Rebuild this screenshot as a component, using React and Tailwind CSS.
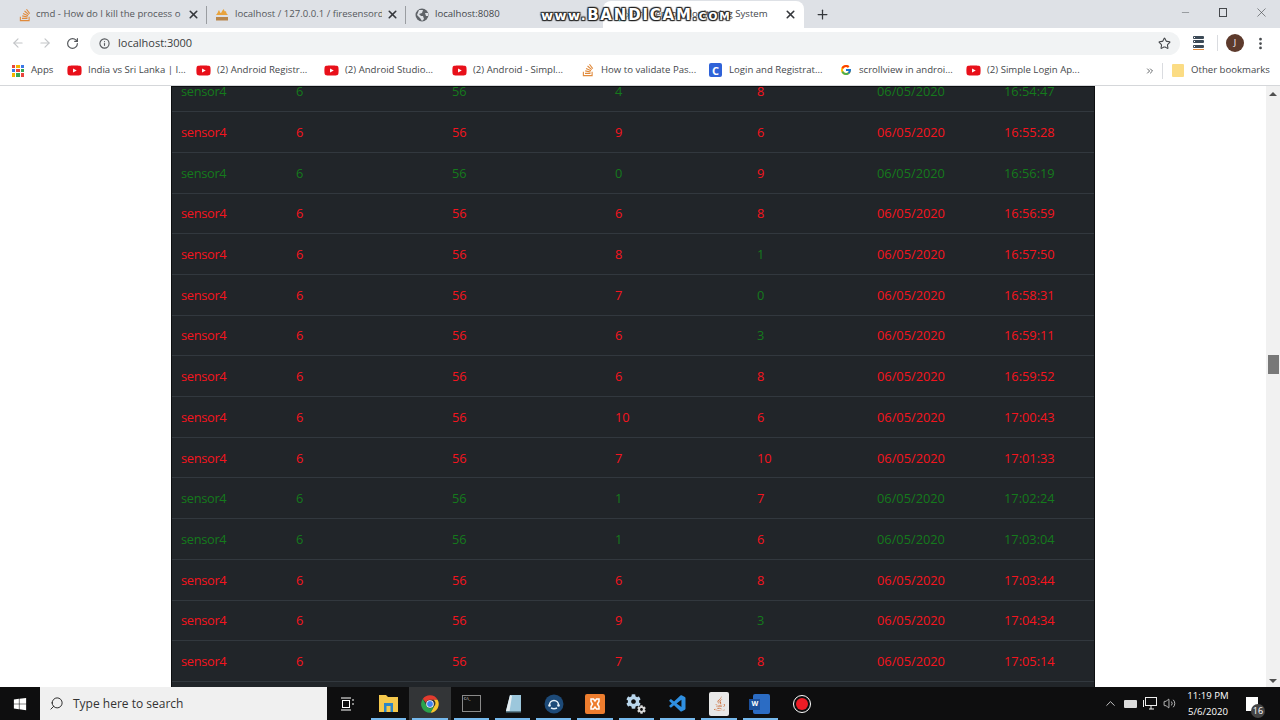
import React from 'react';
import { ArrowLeft, ArrowRight, RotateCw, Info, Star, X, Plus, Minus, MoreVertical, ChevronsRight, ChevronUp, Search, Volume2 } from 'lucide-react';
import { FaWindows, FaYoutube, FaStackOverflow, FaJava, FaCog } from 'react-icons/fa';
import { FcGoogle } from 'react-icons/fc';
import { VscVscode } from 'react-icons/vsc';

const R = 'text-[#f5141e]';
const G = 'text-[#157a1c]';

// [row colour, value 1, value 1 colour, value 2, value 2 colour, time]
const rows = [
  [G, '4', G, '8', R, '16:54:47'],
  [R, '9', R, '6', R, '16:55:28'],
  [G, '0', G, '9', R, '16:56:19'],
  [R, '6', R, '8', R, '16:56:59'],
  [R, '8', R, '1', G, '16:57:50'],
  [R, '7', R, '0', G, '16:58:31'],
  [R, '6', R, '3', G, '16:59:11'],
  [R, '6', R, '8', R, '16:59:52'],
  [R, '10', R, '6', R, '17:00:43'],
  [R, '7', R, '10', R, '17:01:33'],
  [G, '1', G, '7', R, '17:02:24'],
  [G, '1', G, '6', R, '17:03:04'],
  [R, '6', R, '8', R, '17:03:44'],
  [R, '9', R, '3', G, '17:04:34'],
  [R, '7', R, '8', R, '17:05:14'],
];

const bookmarks = [
  { label: 'India vs Sri Lanka | I...', icon: 'yt', w: 'w-[129px]' },
  { label: '(2) Android Registr...', icon: 'yt', w: 'w-[128px]' },
  { label: '(2) Android Studio...', icon: 'yt', w: 'w-[128px]' },
  { label: '(2) Android - Simpl...', icon: 'yt', w: 'w-[128px]' },
  { label: 'How to validate Pas...', icon: 'so', w: 'w-[128px]' },
  { label: 'Login and Registrat...', icon: 'c', w: 'w-[130px]' },
  { label: 'scrollview in androi...', icon: 'g', w: 'w-[128px]' },
  { label: '(2) Simple Login Ap...', icon: 'yt', w: 'w-[130px]' },
];

function BookmarkIcon({ icon }) {
  if (icon === 'yt') return <FaYoutube className="text-[#e8101a]" size={15} />;
  if (icon === 'so') return <FaStackOverflow className="text-[#e08a3c]" size={14} />;
  if (icon === 'g') return <FcGoogle size={12} />;
  return (
    <span className="flex h-[14px] w-[13px] items-center justify-center rounded-[2px] bg-[#2f62d8] text-[11px] font-bold leading-none text-white">C</span>
  );
}

function PmaIcon() {
  return (
    <svg width="14" height="14" viewBox="0 0 14 14">
      <path d="M1 7 C3 5 3 3 4 2 C5 4 5 5 6 5 C7 4 7 2 9 1 C9 3 10 4 11 3 C11 5 12 6 13 7 Z" fill="#e9a33c" />
      <rect x="1" y="9" width="12" height="3.5" fill="#b9864a" />
    </svg>
  );
}

function ReactIcon() {
  return (
    <svg width="14" height="14" viewBox="0 0 14 14" fill="none" stroke="#5fb6c9" strokeWidth="1">
      <ellipse cx="7" cy="7" rx="6.5" ry="2.6" />
      <ellipse cx="7" cy="7" rx="6.5" ry="2.6" transform="rotate(60 7 7)" />
      <ellipse cx="7" cy="7" rx="6.5" ry="2.6" transform="rotate(120 7 7)" />
      <circle cx="7" cy="7" r="1.2" fill="#5fb6c9" stroke="none" />
    </svg>
  );
}

function Chrome({ size = 20 }) {
  return (
    <svg width={size} height={size} viewBox="0 0 48 48">
      <path d="M24 3a21 21 0 0 1 18.2 10.5H24a10.5 10.5 0 0 0-9.9 7L6.6 12A21 21 0 0 1 24 3z" fill="#e33b2e" />
      <path d="M42.2 13.5A21 21 0 0 1 25 45l9-15.7A10.5 10.5 0 0 0 33 13.5z" fill="#f8c52c" />
      <path d="M25 45A21 21 0 0 1 6.6 12l9.2 16.2A10.5 10.5 0 0 0 24 34.5l10-5.2z" fill="#2ba24c" />
      <circle cx="24" cy="24" r="9" fill="#fff" />
      <circle cx="24" cy="24" r="7" fill="#3f82f0" />
    </svg>
  );
}

function Globe() {
  return (
    <svg width="14" height="14" viewBox="0 0 14 14">
      <circle cx="7" cy="7" r="6.5" fill="#5f6368" />
      <path d="M4 2 L8 2 L7 5 L4 6 L6 8 L8 8 L9 11 L7 13 L5 10 L2 7 Z M10 5 L13 5 L13 8 L11 8 Z" fill="#dee1e6" />
    </svg>
  );
}

function Tab({ icon, title, w }) {
  return (
    <div className={`flex h-full shrink-0 items-center pl-[8px] pr-[6px] ${w}`}>
      <span className="flex w-[20px] shrink-0 items-center">{icon}</span>
      <span className="min-w-0 flex-1 overflow-hidden whitespace-nowrap text-[#55585c]">{title}</span>
      <X size={13} strokeWidth={3} className="ml-[4px] shrink-0 text-[#35383c]" />
    </div>
  );
}

function TaskIcon({ children, active, running = true }) {
  return (
    <div className={`relative flex h-full w-[41.3px] items-center justify-center ${active ? 'bg-[#333537]' : ''}`}>
      {children}
      {running && <span className="absolute inset-x-[3px] bottom-0 h-[2px] bg-[#76b9ed]" />}
    </div>
  );
}

function ServerRow() {
  return (
    <span className="flex h-[3px] items-center rounded-[1px] bg-[#3c4a57] pl-[1px]">
      <span className="h-px w-px bg-white" />
    </span>
  );
}

export default function App() {
  return (
    <div className="relative flex h-[720px] w-[1280px] flex-col overflow-hidden bg-white font-['Open_Sans','Noto_Sans',sans-serif] text-[#3c4043]">
      {/* tab strip */}
      <div className="flex h-[28px] shrink-0 items-center bg-[#dee1e6] pt-[1px] text-[9.6px] text-[#45484c]">
        <div className="w-[8px] shrink-0" />
        <Tab w="w-[198px]" title="cmd - How do I kill the process o" icon={<FaStackOverflow className="ml-[2px] text-[#e08a3c]" size={14} />} />
        <span className="h-[18px] w-px shrink-0 bg-[#9a9da1]" />
        <Tab w="w-[198px]" title="localhost / 127.0.0.1 / firesensord" icon={<PmaIcon />} />
        <span className="h-[18px] w-px shrink-0 bg-[#9a9da1]" />
        <div className="flex h-full w-[197px] shrink-0 items-center pl-[9px]">
          <Globe />
          <span className="ml-[6px] whitespace-nowrap">localhost:8080</span>
        </div>
        {/* active tab */}
        <div className="flex h-full w-[201px] shrink-0 items-center rounded-t-[8px] bg-white pl-[12px] pr-[7px]">
          <ReactIcon />
          <span className="ml-[2px] whitespace-nowrap">Fire Sensor Monitoring System</span>
          <X size={13} strokeWidth={3} className="ml-auto text-[#35383c]" />
        </div>
        <Plus size={15} strokeWidth={2} className="ml-[11px] text-[#35383c]" />
        <div className="ml-auto flex h-full items-center pb-[4px] text-[#45484c]">
          <div className="flex w-[38px] justify-center"><Minus size={11} strokeWidth={1} /></div>
          <div className="flex w-[38px] justify-center"><span className="h-[9px] w-[8px] border border-[#45484c]" /></div>
          <div className="flex w-[38px] justify-center"><X size={15} strokeWidth={1} /></div>
        </div>
      </div>

      {/* address bar */}
      <div className="flex h-[30px] shrink-0 items-center bg-white">
        <ArrowLeft size={14} className="ml-[11px] text-[#c3c5c8]" />
        <ArrowRight size={14} className="ml-[13px] text-[#c3c5c8]" />
        <RotateCw size={13} strokeWidth={2.2} className="ml-[14px] text-[#55585c]" />
        <div className="ml-[11px] flex h-[23px] w-[1090px] items-center rounded-full bg-[#f1f3f4] pl-[9px] pr-[9px]">
          <Info size={11} strokeWidth={2.4} className="text-[#55585c]" />
          <span className="ml-[8px] text-[11px] text-[#3a3d40]">localhost:3000</span>
          <Star size={13} className="ml-auto text-[#45484c]" />
        </div>
        <div className="ml-[13px] flex h-[14px] w-[11px] flex-col justify-between">
          <ServerRow />
          <ServerRow />
          <ServerRow />
          <span className="h-px bg-[#e08a3c]" />
        </div>
        <span className="ml-[13px] h-[16px] w-px bg-[#dadce0]" />
        <span className="ml-[8px] flex h-[18px] w-[18px] items-center justify-center rounded-full bg-[#5d3a2c] text-[9px] text-white">J</span>
        <MoreVertical size={15} strokeWidth={2.4} className="ml-[9px] text-[#45484c]" />
      </div>

      {/* bookmarks */}
      <div className="flex h-[28px] shrink-0 items-center border-b border-b-[#d5d7da] pb-[2px] text-[9.6px] text-[#45484c]">
        <div className="ml-[12px] grid h-[12px] w-[12px] grid-cols-3 gap-[1px]">
          {['#e8453c', '#f4b400', '#3b78e7', '#3b78e7', '#e8453c', '#34a853', '#f4b400', '#34a853', '#e8453c'].map((c, i) => (
            <span key={i} style={{ backgroundColor: c }} />
          ))}
        </div>
        <span className="ml-[7px] w-[36px]">Apps</span>
        <div className="flex items-center">
          {bookmarks.map((b) => (
            <div key={b.label} className={`flex shrink-0 items-center ${b.w}`}>
              <span className="flex w-[15px] justify-center"><BookmarkIcon icon={b.icon} /></span>
              <span className="ml-[6px] whitespace-nowrap">{b.label}</span>
            </div>
          ))}
        </div>
        <ChevronsRight size={10} className="ml-[49px] text-[#45484c]" />
        <span className="ml-[7px] h-[16px] w-px bg-[#dadce0]" />
        <span className="ml-[9px] h-[13px] w-[12px] rounded-[1px] bg-[#fbdc84]" />
        <span className="ml-[7px] whitespace-nowrap">Other bookmarks</span>
      </div>

      {/* page */}
      <div className="flex min-h-0 flex-1">
        <div className="min-w-0 flex-1 overflow-hidden pl-[171px]">
          <div className="w-[924px] overflow-hidden border-x border-x-[#0d0f11] border-t border-t-[#0c0e10] bg-[#212529] text-[12.8px]">
            <div className="-mt-[15.4px]">
              {rows.map(([c, a, ac, b, bc, time], i) => (
                <div key={i} className={`grid h-[40.7px] grid-cols-[114px_156px_163px_142px_120px_127px_100px] items-center border-b border-b-[#32383e] pt-[1px] ${c}`}>
                  <div className="pl-[9px] tracking-[-0.3px]">sensor4</div>
                  <div className="pl-[10px]">6</div>
                  <div className="pl-[10px]">56</div>
                  <div className={`pl-[10px] ${ac}`}>{a}</div>
                  <div className={`pl-[10px] ${bc}`}>{b}</div>
                  <div className="pl-[10px]">06/05/2020</div>
                  <div className="pl-[10px]">{time}</div>
                </div>
              ))}
              <div className="h-[8px]" />
            </div>
          </div>
        </div>
        {/* scrollbar */}
        <div className="flex w-[14px] shrink-0 flex-col items-center bg-[#f1f1f1] pt-[6px]">
          <span className="h-0 w-0 border-x-[4px] border-b-[4px] border-x-transparent border-b-[#505050]" />
          <span className="mt-[259px] h-[19px] w-[11px] bg-[#787878]" />
          <span className="mb-[4px] mt-auto h-0 w-0 border-x-[4px] border-t-[4px] border-x-transparent border-t-[#505050]" />
        </div>
      </div>

      {/* taskbar */}
      <div className="flex h-[33px] shrink-0 items-center bg-[#0e0e0f] text-white">
        <div className="flex w-[40px] justify-center"><FaWindows size={14} /></div>
        <div className="flex h-full w-[287px] items-center bg-[#f0f0f0] pl-[9px] text-[12px] text-[#333]">
          <Search size={15} className="-scale-x-100 text-[#222]" strokeWidth={1.5} />
          <span className="ml-[9px]">Type here to search</span>
        </div>
        <div className="flex h-full items-center">
          <div className="flex h-full w-[41px] items-center justify-center">
            <svg width="13" height="14" viewBox="0 0 13 14" fill="none" stroke="#fff">
              <rect x="1.5" y="3.5" width="7" height="7" />
              <path d="M0 1h10M0 13h10M12 2v2M12 6v2" />
            </svg>
          </div>
          <TaskIcon>
            <svg width="19" height="17" viewBox="0 0 19 17"><path d="M0 0h7l2 2h10v15H0z" fill="#f5c84c" /><rect x="5" y="8" width="9" height="9" fill="#2c86c9" /><rect x="7.5" y="11" width="4" height="6" fill="#f5c84c" /></svg>
          </TaskIcon>
          <TaskIcon active><Chrome size={20} /></TaskIcon>
          <TaskIcon>
            <div className="h-[17px] w-[19px] border border-[#8a8a8a] bg-[#111] pl-[1px] text-[4px] leading-[5px] text-white">C:\_</div>
          </TaskIcon>
          <TaskIcon>
            <svg width="18" height="20" viewBox="0 0 18 20"><path d="M6 1h11v16H2z" fill="#9cc7dc" /><path d="M2 17l4-16 2 1-2.5 15.5z" fill="#e5eef2" /><path d="M2 17h15v1.5H2z" fill="#5c7f8f" /></svg>
          </TaskIcon>
          <TaskIcon>
            <svg width="20" height="20" viewBox="0 0 20 20" fill="none"><circle cx="10" cy="10" r="9.5" fill="#1d4a78" /><path d="M5.5 11a4.5 4.5 0 1 1 9 0" stroke="#e6f0f8" strokeWidth="1.5" /><path d="M7 14c2 1 4 1 6 0" stroke="#e6f0f8" strokeWidth="1.4" /><circle cx="5.5" cy="11.5" r="1.3" fill="#e6f0f8" /><circle cx="14.5" cy="11.5" r="1.3" fill="#e6f0f8" /></svg>
          </TaskIcon>
          <TaskIcon>
            <svg width="20" height="20" viewBox="0 0 20 20" fill="none">
              <rect width="20" height="20" rx="2" fill="#ee7d2e" />
              <path d="M6 5h2.5l1.5 2 1.5-2H14v2.5L12.5 10l1.5 2.500V15h-2.500L10 13l-1.500 2H6v-2.500L7.500 10 6 7.500z" stroke="#fff" strokeWidth="1.5" />
            </svg>
          </TaskIcon>
          <TaskIcon>
            <div className="relative h-[20px] w-[20px]">
              <FaCog size={15} className="absolute left-0 top-0 text-[#b9d6ec]" />
              <FaCog size={9} className="absolute bottom-0 right-0 text-[#d8d8d8]" />
            </div>
          </TaskIcon>
          <TaskIcon><VscVscode size={20} className="text-[#2f8fe0]" /></TaskIcon>
          <TaskIcon>
            <div className="flex h-[24px] w-[20px] items-center justify-center rounded-[2px] bg-[#e8e8e8]"><FaJava size={15} className="text-[#c9622a]" /></div>
          </TaskIcon>
          <TaskIcon>
            <div className="relative ml-[3px] h-[20px] w-[17px] rounded-[2px] bg-[#2b6cc4]">
              <span className="absolute -left-[4px] top-[5px] flex h-[11px] w-[11px] items-center justify-center bg-[#1b4f9c] text-[7px] font-bold text-white">W</span>
            </div>
          </TaskIcon>
          <TaskIcon running={false}>
            <span className="flex h-[18px] w-[18px] items-center justify-center rounded-full border-[1.5px] border-white"><span className="h-[12px] w-[12px] rounded-full bg-[#ee1c25]" /></span>
          </TaskIcon>
        </div>
        <div className="ml-auto flex h-full items-center">
          <ChevronUp size={15} strokeWidth={1.2} />
          <span className="ml-[6px] h-[8px] w-[13px] rounded-[1px] bg-[#ddd]" />
          <svg className="ml-[6px]" width="14" height="13" viewBox="0 0 14 13" fill="none" stroke="#eee"><rect x="2.5" y="0.5" width="11" height="8" /><path d="M6 12h5M8 9v3M0.5 3v7" /></svg>
          <Volume2 size={13} strokeWidth={1.3} className="ml-[6px]" />
          <div className="ml-[7px] flex w-[50px] flex-col items-center text-[9.6px] leading-[16px]">
            <span>11:19 PM</span>
            <span>5/6/2020</span>
          </div>
          <div className="relative ml-[13px] mr-[22px] h-[14px] w-[12px] border border-white bg-white">
            <span className="absolute -bottom-[8px] -right-[8px] flex h-[14px] w-[14px] items-center justify-center rounded-full bg-[#444] text-[9px] leading-none">16</span>
          </div>
        </div>
      </div>

      {/* recorder watermark */}
      <div className="absolute left-[541px] top-[4px] flex items-baseline whitespace-nowrap font-['DejaVu_Sans',sans-serif] font-bold text-white [text-shadow:0_0_2px_#222,1px_1px_1px_#222,-1px_-1px_1px_#222,1px_-1px_1px_#222,-1px_1px_1px_#222]">
        <span className="text-[13px] tracking-[1.5px]">www.</span>
        <span className="text-[15px] tracking-[1.8px]">BANDICAM</span>
        <span className="text-[10.5px] uppercase tracking-[2px]">.com</span>
      </div>
    </div>
  );
}
